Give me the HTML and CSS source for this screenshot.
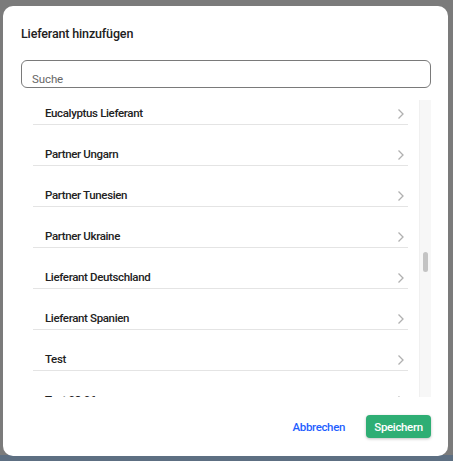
FILE: index.html
```html
<!DOCTYPE html>
<html lang="de">
<head>
<meta charset="utf-8">
<title>Lieferant hinzufügen</title>
<link rel="stylesheet" href="styles.css">
</head>
<body>
<div class="backdrop">
  <div class="page-area"></div>
  <div class="page-bottom"></div>
</div>
<div class="dialog">
  <h2 class="title">Lieferant hinzufügen</h2>
  <div class="search"><span class="placeholder">Suche</span></div>
  <div class="list-wrap">
    <div class="list">
      <div class="list-inner">
        <div class="row"><span>Eucalyptus Lieferant</span><svg class="chev" viewBox="0 0 8 12" width="8" height="12"><path d="M1.5 1.5 L6 6 L1.5 10.5" /></svg></div>
        <div class="row"><span>Partner Ungarn</span><svg class="chev" viewBox="0 0 8 12" width="8" height="12"><path d="M1.5 1.5 L6 6 L1.5 10.5" /></svg></div>
        <div class="row"><span>Partner Tunesien</span><svg class="chev" viewBox="0 0 8 12" width="8" height="12"><path d="M1.5 1.5 L6 6 L1.5 10.5" /></svg></div>
        <div class="row"><span>Partner Ukraine</span><svg class="chev" viewBox="0 0 8 12" width="8" height="12"><path d="M1.5 1.5 L6 6 L1.5 10.5" /></svg></div>
        <div class="row"><span>Lieferant Deutschland</span><svg class="chev" viewBox="0 0 8 12" width="8" height="12"><path d="M1.5 1.5 L6 6 L1.5 10.5" /></svg></div>
        <div class="row"><span>Lieferant Spanien</span><svg class="chev" viewBox="0 0 8 12" width="8" height="12"><path d="M1.5 1.5 L6 6 L1.5 10.5" /></svg></div>
        <div class="row"><span>Test</span><svg class="chev" viewBox="0 0 8 12" width="8" height="12"><path d="M1.5 1.5 L6 6 L1.5 10.5" /></svg></div>
        <div class="row"><span>Test 02.06</span><svg class="chev" viewBox="0 0 8 12" width="8" height="12"><path d="M1.5 1.5 L6 6 L1.5 10.5" /></svg></div>
      </div>
    </div>
    <div class="track"><div class="thumb"></div></div>
  </div>
  <div class="actions">
    <button class="btn-text">Abbrechen</button>
    <button class="btn-primary">Speichern</button>
  </div>
</div>
</body>
</html>
```
FILE: styles.css
```css
html, body {
  margin: 0;
  padding: 0;
  height: 100%;
}
body {
  font-family: Roboto, "Liberation Sans", sans-serif;
  overflow: hidden;
}
.backdrop {
  display: flex;
  flex-direction: column;
  height: 100%;
}
.page-area {
  flex: 1;
  background: #7b7b7b;
}
.page-bottom {
  height: 6px;
  background: #5d6f82;
}
.dialog {
  position: fixed;
  left: 3px;
  top: 6px;
  width: 445px;
  height: 450px;
  background: #fff;
  border-radius: 10px;
  box-sizing: border-box;
  padding: 0 17px 0 18px;
  display: flex;
  flex-direction: column;
}
.title {
  margin: 0 0 18px;
  padding-top: 20px;
  height: 16px;
  font-size: 12.5px;
  letter-spacing: -0.15px;
  font-weight: 500;
  color: #212121;
  line-height: 16px;
}
.search {
  height: 28px;
  border: 1px solid #7a7a7a;
  border-radius: 6px;
  display: flex;
  align-items: flex-end;
  padding: 0 10px 1px;
  box-sizing: border-box;
}
.placeholder {
  font-size: 11.5px;
  letter-spacing: -0.1px;
  color: #666;
  line-height: 14px;
}
.list-wrap {
  margin-top: 12px;
  height: 297px;
  display: flex;
}
.list {
  flex: 1;
  overflow: hidden;
  padding: 0 11px 0 12px;
}
.list-inner {
  margin-top: -16px;
}
.row {
  display: flex;
  align-items: center;
  justify-content: space-between;
  padding: 21px 3px 3px 12px;
  height: 16px;
  border-bottom: 1px solid #e4e4e4;
  font-size: 11.5px;
  letter-spacing: -0.35px;
  font-weight: 500;
  color: #222;
}
.chev {
  fill: none;
  stroke: #b0b0b0;
  stroke-width: 1.3;
  margin-top: 1px;
}
.track {
  width: 12px;
  background: #f7f7f7;
  border-left: 1px solid #f0f0f0;
  box-sizing: border-box;
}
.thumb {
  width: 5px;
  height: 20px;
  margin: 152px 0 0 3px;
  background: #c4c4c4;
  border-radius: 3px;
}
.actions {
  display: flex;
  justify-content: flex-end;
  align-items: center;
  gap: 21px;
  margin-top: 18px;
}
.btn-text {
  border: none;
  background: none;
  font-family: inherit;
  font-size: 11.5px;
  letter-spacing: -0.35px;
  font-weight: 500;
  color: #1f5fff;
  padding: 0;
}
.btn-primary {
  border: none;
  background: #2eae74;
  color: #fff;
  font-family: inherit;
  font-size: 11.5px;
  letter-spacing: -0.35px;
  font-weight: 500;
  height: 23px;
  width: 65px;
  border-radius: 4px;
  box-shadow: 0 1px 3px rgba(0,0,0,0.25);
  padding: 0;
}
```
